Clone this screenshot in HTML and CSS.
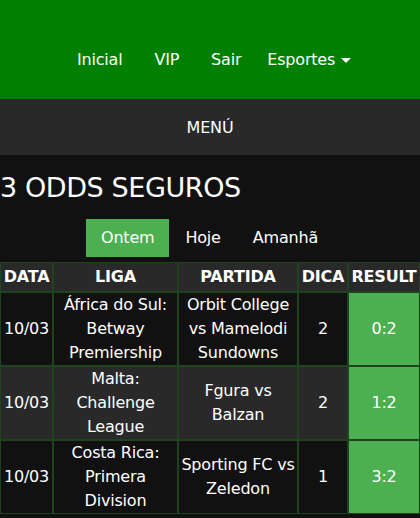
FILE: index.html
```html
<!DOCTYPE html>
<html lang="pt">
  <head>
    <meta charset="UTF-8" />
    <meta name="viewport" content="width=device-width, initial-scale=1.0" />
    <title>3 Odds Seguros</title>
    <link rel="stylesheet" href="styles.css">
  </head>
  <body>
    <header class="topbar">
      <nav class="nav">
        <a href="#">Inicial</a>
        <a href="#">VIP</a>
        <a href="#">Sair</a>
        <a href="#" class="dropdown">Esportes <span class="caret"></span></a>
      </nav>
    </header>

    <div class="menubar">MENÚ</div>

    <main class="content">
      <h2 class="title">3 ODDS SEGUROS</h2>

      <div class="tabs">
        <a href="#" class="tab active">Ontem</a>
        <a href="#" class="tab">Hoje</a>
        <a href="#" class="tab">Amanhã</a>
      </div>

      <table class="odds">
        <thead>
          <tr>
            <th class="c-date">DATA</th>
            <th class="c-liga">LIGA</th>
            <th class="c-match">PARTIDA</th>
            <th class="c-tip">DICA</th>
            <th class="c-res">RESULT</th>
          </tr>
        </thead>
        <tbody>
          <tr>
            <td>10/03</td>
            <td>África do Sul: Betway Premiership</td>
            <td>Orbit College vs Mamelodi Sundowns</td>
            <td>2</td>
            <td class="win">0:2</td>
          </tr>
          <tr>
            <td>10/03</td>
            <td>Malta: Challenge League</td>
            <td>Fgura vs Balzan</td>
            <td>2</td>
            <td class="win">1:2</td>
          </tr>
          <tr>
            <td>10/03</td>
            <td>Costa Rica: Primera Division</td>
            <td>Sporting FC vs Zeledon</td>
            <td>1</td>
            <td class="win">3:2</td>
          </tr>
        </tbody>
      </table>
    </main>
  </body>
</html>
```

FILE: styles.css
```css
* {
  margin: 0;
  padding: 0;
  box-sizing: border-box;
}
body {
  background-color: #111;
  color: #fff;
  font-family: "DejaVu Sans", sans-serif;
  font-size: 16px;
  letter-spacing: -0.2px;
}
a {
  color: #fff;
  text-decoration: none;
}
/* topo verde */
.topbar {
  background: #008000;
  height: 99px;
  display: flex;
  align-items: center;
  justify-content: center;
}
.nav {
  display: flex;
  gap: 32px;
  padding-top: 20px;
  padding-left: 8px;
}
.nav .dropdown {
  margin-left: -6px;
}
.caret {
  display: inline-block;
  width: 0;
  height: 0;
  border-left: 5px solid transparent;
  border-right: 5px solid transparent;
  border-top: 5px solid #fff;
  vertical-align: middle;
  margin-left: 1px;
}
.menubar {
  background: #292929;
  height: 56px;
  display: flex;
  align-items: center;
  justify-content: center;
}
/* conteudo */
.title {
  font-size: 27px;
  font-weight: normal;
  letter-spacing: -0.4px;
  padding-top: 16px;
  line-height: 34px;
}
.tabs {
  display: flex;
  justify-content: center;
  margin-top: 14px;
  margin-bottom: 5px;
}
.tab {
  display: block;
  padding: 0 16px;
  line-height: 38px;
}
.tab.active {
  background: #4caf50;
  padding: 0 15px;
}
.odds {
  width: 100%;
  border-spacing: 0;
  text-align: center;
}
.odds th,
.odds td {
  border: 1px solid #1e431e;
  line-height: 24px;
  padding: 0 1px;
}
.odds th {
  background: #292929;
  font-weight: bold;
  padding: 2px 1px;
}
.odds tbody tr:nth-child(even) td {
  background: #292929;
}
.odds td.win,
.odds tbody tr:nth-child(even) td.win {
  background: #4caf50;
}
.c-date { width: 53px; }
.c-liga { width: 125px; }
.c-match { width: 120px; }
.c-tip { width: 50px; }
```
